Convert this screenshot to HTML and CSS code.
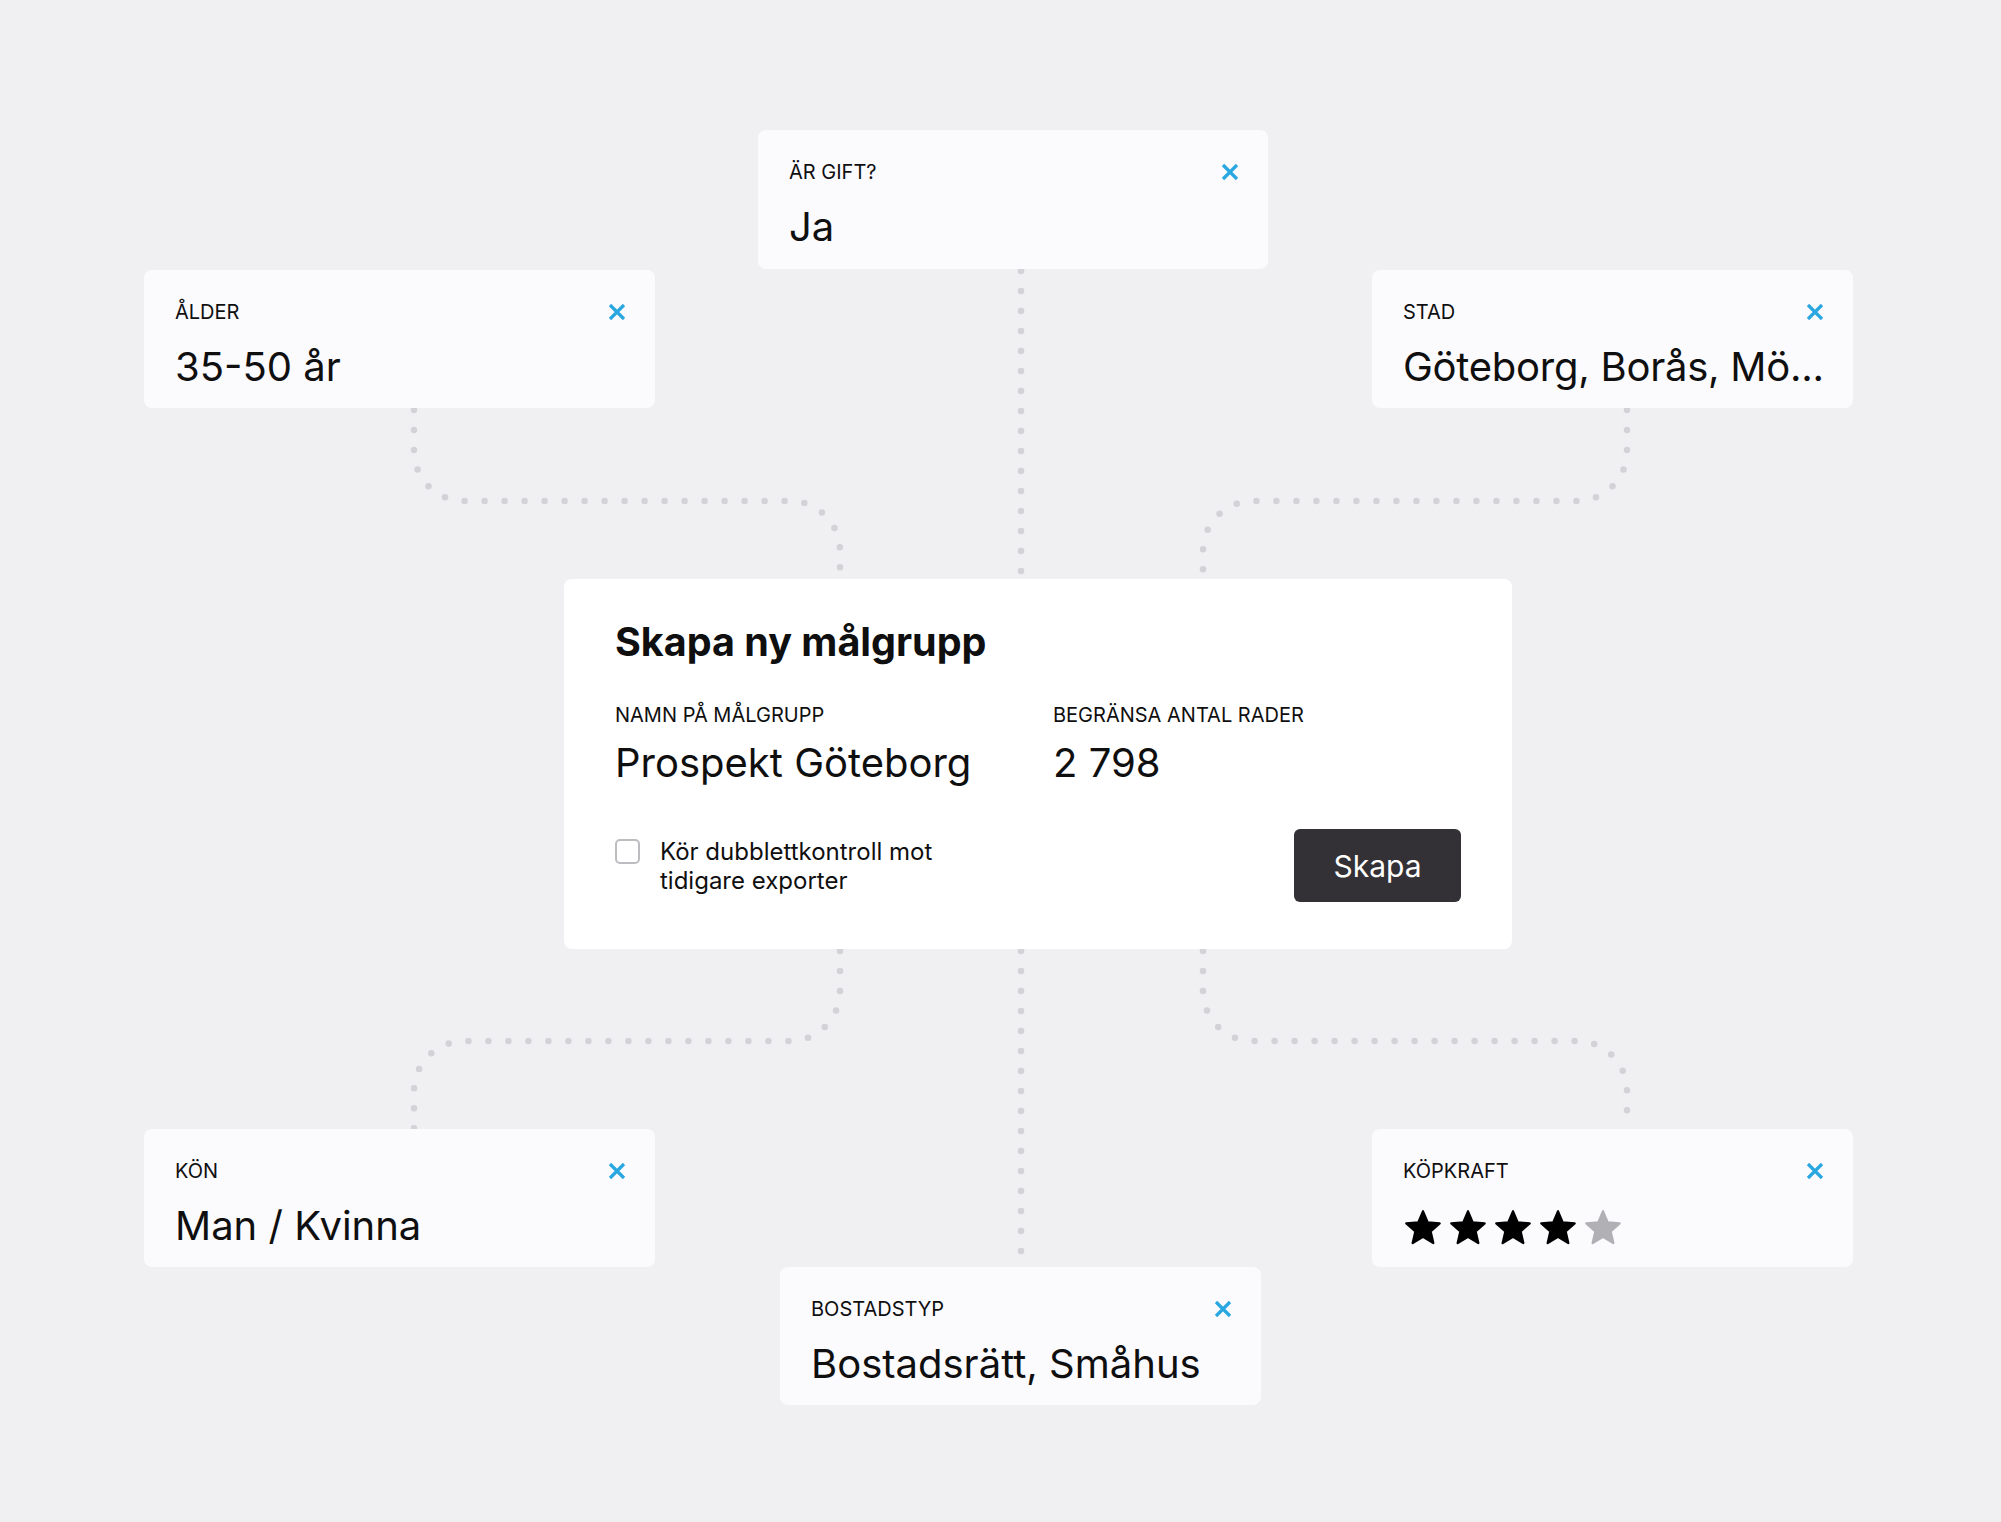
FILE: index.html
```html
<!DOCTYPE html>
<html>
<head lang="sv">
    <meta charset="UTF-8">
    <title>Skapa ny målgrupp</title>
    <link rel="stylesheet" href="styles.css">
</head>
<body>
<div id="canvas">
    <svg class="links" width="2001" height="1522" viewBox="0 0 2001 1522">
        <path d="M1021 271 V579"/>
        <path d="M1021 951 V1267"/>
        <path d="M414 410 V451 A50 50 0 0 0 464 501 H790 A50 50 0 0 1 840 551 V579"/>
        <path d="M1627 410 V451 A50 50 0 0 1 1577 501 H1253 A50 50 0 0 0 1203 551 V579"/>
        <path d="M840 951 V991 A50 50 0 0 1 790 1041 H464 A50 50 0 0 0 414 1091 V1129"/>
        <path d="M1203 951 V991 A50 50 0 0 0 1253 1041 H1577 A50 50 0 0 1 1627 1091 V1129"/>
    </svg>

    <div class="filter" id="f-gift">
        <div class="filter-head">
            <span class="label">ÄR GIFT?</span>
            <svg class="close" width="18" height="18" viewBox="0 0 18 18"><path d="M2 2 L16 16 M16 2 L2 16"/></svg>
        </div>
        <div class="value">Ja</div>
    </div>

    <div class="filter" id="f-alder">
        <div class="filter-head">
            <span class="label">ÅLDER</span>
            <svg class="close" width="18" height="18" viewBox="0 0 18 18"><path d="M2 2 L16 16 M16 2 L2 16"/></svg>
        </div>
        <div class="value">35-50 år</div>
    </div>

    <div class="filter" id="f-stad">
        <div class="filter-head">
            <span class="label">STAD</span>
            <svg class="close" width="18" height="18" viewBox="0 0 18 18"><path d="M2 2 L16 16 M16 2 L2 16"/></svg>
        </div>
        <div class="value">Göteborg, Borås, Mö...</div>
    </div>

    <div class="filter" id="f-kon">
        <div class="filter-head">
            <span class="label">KÖN</span>
            <svg class="close" width="18" height="18" viewBox="0 0 18 18"><path d="M2 2 L16 16 M16 2 L2 16"/></svg>
        </div>
        <div class="value">Man / Kvinna</div>
    </div>

    <div class="filter" id="f-kopkraft">
        <div class="filter-head">
            <span class="label">KÖPKRAFT</span>
            <svg class="close" width="18" height="18" viewBox="0 0 18 18"><path d="M2 2 L16 16 M16 2 L2 16"/></svg>
        </div>
        <div class="stars">
            <svg class="star on" viewBox="0 0 24 24"><path d="M12 17.27L18.18 21l-1.64-7.03L22 9.24l-7.19-.61L12 2 9.19 8.63 2 9.24l5.46 4.73L5.82 21z"/></svg>
            <svg class="star on" viewBox="0 0 24 24"><path d="M12 17.27L18.18 21l-1.64-7.03L22 9.24l-7.19-.61L12 2 9.19 8.63 2 9.24l5.46 4.73L5.82 21z"/></svg>
            <svg class="star on" viewBox="0 0 24 24"><path d="M12 17.27L18.18 21l-1.64-7.03L22 9.24l-7.19-.61L12 2 9.19 8.63 2 9.24l5.46 4.73L5.82 21z"/></svg>
            <svg class="star on" viewBox="0 0 24 24"><path d="M12 17.27L18.18 21l-1.64-7.03L22 9.24l-7.19-.61L12 2 9.19 8.63 2 9.24l5.46 4.73L5.82 21z"/></svg>
            <svg class="star" viewBox="0 0 24 24"><path d="M12 17.27L18.18 21l-1.64-7.03L22 9.24l-7.19-.61L12 2 9.19 8.63 2 9.24l5.46 4.73L5.82 21z"/></svg>
        </div>
    </div>

    <div class="filter" id="f-bostad">
        <div class="filter-head">
            <span class="label">BOSTADSTYP</span>
            <svg class="close" width="18" height="18" viewBox="0 0 18 18"><path d="M2 2 L16 16 M16 2 L2 16"/></svg>
        </div>
        <div class="value">Bostadsrätt, Småhus</div>
    </div>

    <div id="create-box">
        <h1>Skapa ny målgrupp</h1>
        <div class="fields">
            <div class="field">
                <span class="label">NAMN PÅ MÅLGRUPP</span>
                <div class="value">Prospekt Göteborg</div>
            </div>
            <div class="field">
                <span class="label">BEGRÄNSA ANTAL RADER</span>
                <div class="value">2 798</div>
            </div>
        </div>
        <div class="actions">
            <label class="check">
                <span class="box"></span>
                <span class="check-text">Kör dubblettkontroll mot tidigare exporter</span>
            </label>
            <button class="btn">Skapa</button>
        </div>
    </div>
</div>
</body>
</html>
```

FILE: styles.css
```css
*{
    padding: 0;
    margin: 0;
    box-sizing: border-box;
}
body{
    background: #f0eff2;
    font-family: Inter, "Noto Sans", sans-serif;
    color: #0f0f10;
}
#canvas{
    width: 2001px;
    height: 1522px;
    position: relative;
    overflow: hidden;
}
.links{
    position: absolute;
    left: 0;
    top: 0;
}
.links path{
    fill: none;
    stroke: #d3d2d7;
    stroke-width: 6.5;
    stroke-linecap: round;
    stroke-dasharray: 0 20;
}

/* filter cards round the box */
.filter{
    position: absolute;
    height: 138px;
    padding: 30px 29px 0 31px;
    background: #fbfafd;
    border-radius: 8px;
}
#f-gift{ left: 758px; top: 130px; width: 510px; height: 139px; }
#f-alder{ left: 144px; top: 270px; width: 511px; }
#f-stad{ left: 1372px; top: 270px; width: 481px; }
#f-kon{ left: 144px; top: 1129px; width: 511px; }
#f-kopkraft{ left: 1372px; top: 1129px; width: 481px; }
#f-bostad{ left: 780px; top: 1267px; width: 481px; }

.filter-head{
    display: flex;
    justify-content: space-between;
    align-items: center;
}
.label{
    font-size: 20px;
    line-height: 24px;
}
.close{
    display: block;
}
.close path{
    stroke: #29a7e0;
    stroke-width: 3.2;
    fill: none;
}
.value{
    font-size: 40px;
    line-height: 48px;
    white-space: nowrap;
}
#f-stad .value{
    letter-spacing: -0.25px;
}
.filter .value{
    margin-top: 19px;
}
.stars{
    display: flex;
    gap: 5px;
    margin-top: 25px;
}
.star{
    width: 40px;
    height: 40px;
}
.star path{
    fill: #b1b0b4;
    stroke: #b1b0b4;
    stroke-width: 1.4;
    stroke-linejoin: round;
}
.star.on path{
    fill: #000;
    stroke: #000;
}

/* center box */
#create-box{
    position: absolute;
    left: 564px;
    top: 579px;
    width: 948px;
    height: 370px;
    padding: 40px 51px 47px;
    background: #fff;
    border-radius: 8px;
}
#create-box h1{
    font-size: 39.5px;
    line-height: 46px;
    font-weight: 700;
}
.fields{
    display: grid;
    grid-template-columns: 438px 1fr;
    margin-top: 38px;
}
.field .value{
    margin-top: 12px;
}
.actions{
    display: flex;
    justify-content: space-between;
    align-items: center;
    margin-top: 42px;
}
.check{
    display: flex;
    align-items: flex-start;
    gap: 20px;
}
.box{
    width: 25px;
    height: 25px;
    margin-top: 2px;
    border: 2px solid #bdbcc1;
    border-radius: 5px;
    background: #fff;
}
.check-text{
    width: 310px;
    font-size: 24px;
    line-height: 29px;
}
.btn{
    width: 167px;
    height: 73px;
    border: none;
    border-radius: 6px;
    background: #333135;
    color: #fff;
    font-family: Inter, "Noto Sans", sans-serif;
    font-size: 30px;
}
```
